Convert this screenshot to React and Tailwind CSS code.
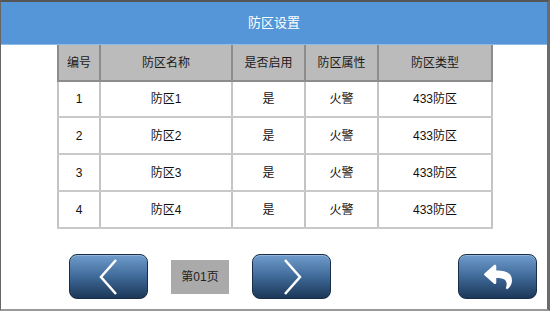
import React from "react";
import { FaReply } from "react-icons/fa";

const font = { fontFamily: '"Liberation Sans", "Noto Sans CJK SC", sans-serif' };

const cols = [
  { w: "w-[42px]", h: "编号" },
  { w: "w-[132px]", h: "防区名称" },
  { w: "w-[73px]", h: "是否启用" },
  { w: "w-[73px]", h: "防区属性" },
  { w: "w-[116px]", h: "防区类型" },
];

const rows = [
  ["1", "防区1", "是", "火警", "433防区"],
  ["2", "防区2", "是", "火警", "433防区"],
  ["3", "防区3", "是", "火警", "433防区"],
  ["4", "防区4", "是", "火警", "433防区"],
];

function NavButton({ children }) {
  return (
    <div className="w-[79px] h-[45px] rounded-[8px] border border-[#1a2e47] bg-gradient-to-b from-[#709dcd] via-[#3f6a99] to-[#1c3859] flex items-center justify-center shadow-[inset_0_1px_0_rgba(255,255,255,0.25)]">
      {children}
    </div>
  );
}

export default function App() {
  return (
    <div
      className="w-[550px] h-[311px] bg-white flex flex-col border-t-2 border-t-[#555555] border-l border-l-[#666666] border-r-[3px] border-r-[#6b6b6b] border-b-2 border-b-[#9a9a9a]"
      style={font}
    >
      <div className="h-[42px] bg-[#5596d8] flex items-center justify-center text-white text-[13px]">
        防区设置
      </div>
      <div className="h-[1px] bg-[#8fbbe8]" />

      <div className="ml-[56px] flex flex-col w-[436px]">
        <div className="flex h-[37px] bg-[#bbbbbb] border-b-2 border-b-[#8c8c8c]">
          {cols.map((c, i) => (
            <div
              key={i}
              className={`${c.w} flex items-center justify-center text-[12px] text-[#1a1a1a] border-l-2 border-l-[#8c8c8c] ${
                i === cols.length - 1 ? "border-r-2 border-r-[#8c8c8c]" : ""
              }`}
            >
              {c.h}
            </div>
          ))}
        </div>
        {rows.map((r, ri) => (
          <div
            key={ri}
            className={`flex ${ri === 0 ? "h-[36px]" : "h-[37px]"} border-b-2 border-b-[#c9c9c9]`}
          >
            {r.map((v, i) => (
              <div
                key={i}
                className={`${cols[i].w} flex items-center justify-center text-[12px] text-[#111111] border-l-2 border-l-[#c4c4c4] ${
                  i === cols.length - 1 ? "border-r-2 border-r-[#c4c4c4]" : ""
                }`}
              >
                {v}
              </div>
            ))}
          </div>
        ))}
      </div>

      <div className="mt-[25px] pl-[68px] flex items-center">
        <NavButton>
          <svg width="20" height="36" viewBox="0 0 20 36">
            <polyline points="17,1 2,18 17,35" fill="none" stroke="white" strokeWidth="2.5" />
          </svg>
        </NavButton>
        <div className="ml-[23px] w-[58px] h-[34px] bg-[#aaaaaa] flex items-center justify-center text-[12px] text-[#222222]">
          第01页
        </div>
        <div className="ml-[23px]">
          <NavButton>
            <svg width="20" height="36" viewBox="0 0 20 36">
              <polyline points="3,1 18,18 3,35" fill="none" stroke="white" strokeWidth="2.5" />
            </svg>
          </NavButton>
        </div>
        <div className="ml-[127px]">
          <NavButton>
            <FaReply className="text-white" size={28} />
          </NavButton>
        </div>
      </div>
    </div>
  );
}
